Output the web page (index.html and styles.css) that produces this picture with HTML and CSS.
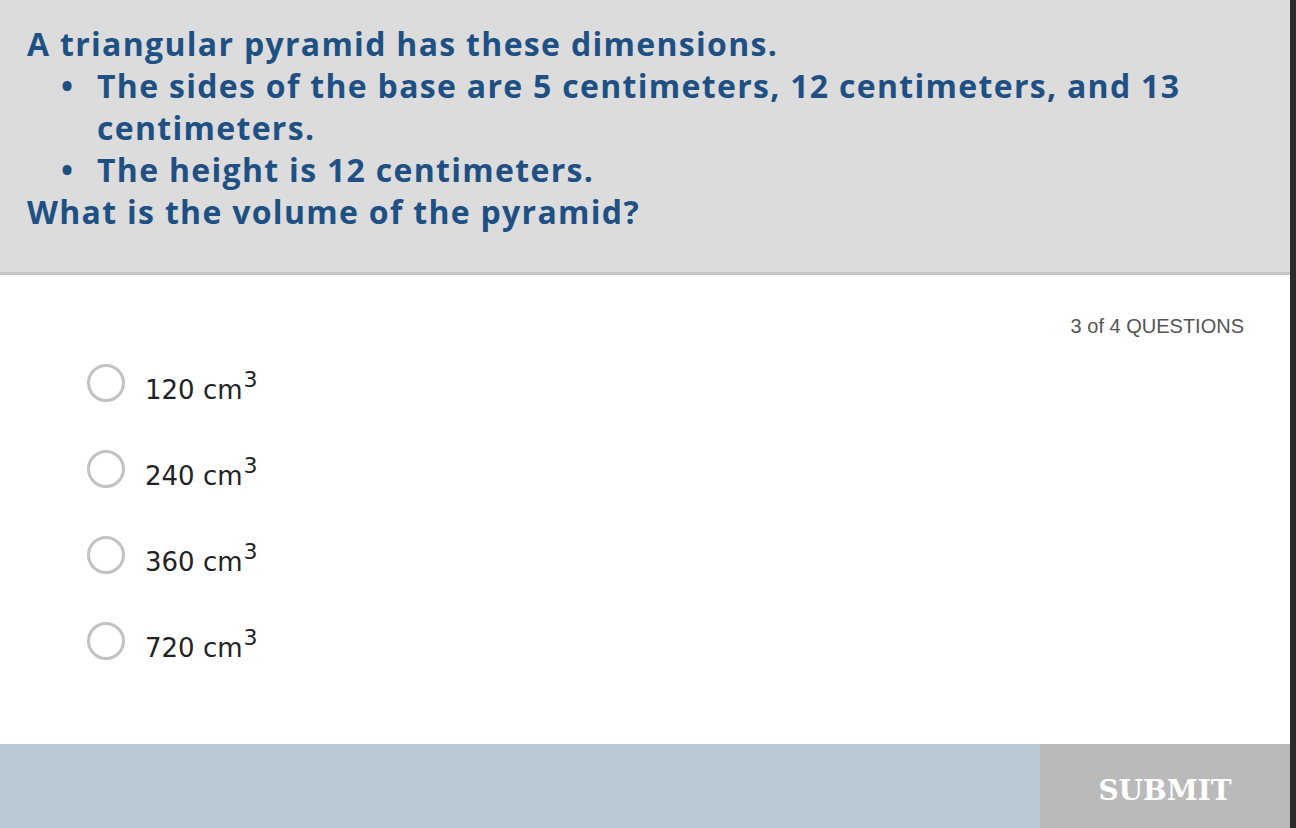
FILE: index.html
```html
<!DOCTYPE html>
<html lang="en">
<head>
  <meta charset="UTF-8" />
  <meta name="viewport" content="width=device-width, initial-scale=1.0" />
  <title>Quiz</title>
  <link rel="stylesheet" href="styles.css">
</head>
<body>
  <div id="quiz">
    <section class="question">
      <p>A triangular pyramid has these dimensions.</p>
      <ul>
        <li>The sides of the base are 5 centimeters, 12 centimeters, and 13 centimeters.</li>
        <li>The height is 12 centimeters.</li>
      </ul>
      <p>What is the volume of the pyramid?</p>
    </section>

    <section class="answers">
      <div class="progress">3 of 4 QUESTIONS</div>
      <label class="choice"><span class="radio"></span><span class="choice-text">120 cm<sup>3</sup></span></label>
      <label class="choice"><span class="radio"></span><span class="choice-text">240 cm<sup>3</sup></span></label>
      <label class="choice"><span class="radio"></span><span class="choice-text">360 cm<sup>3</sup></span></label>
      <label class="choice"><span class="radio"></span><span class="choice-text">720 cm<sup>3</sup></span></label>
    </section>

    <footer>
      <button class="submit">SUBMIT</button>
    </footer>
  </div>
</body>
</html>
```

FILE: styles.css
```css
/* ======================
   Base
   ====================== */
*, *::before, *::after {
  box-sizing: border-box;
  margin: 0;
  padding: 0;
}
html, body {
  height: 100%;
  background-color: #2b2b2b;
}

#quiz {
  width: 1290px;
  height: 828px;
  display: flex;
  flex-direction: column;
  background-color: #fff;
}

/* ======================
   Question
   ====================== */
.question {
  height: 275px;
  padding: 23px 60px 0 27px;
  background-color: #dcdcdc;
  border-bottom: 3px solid #c4c4c4;
  font-family: 'Open Sans', sans-serif;
  font-weight: 700;
  font-size: 32px;
  line-height: 42px;
  color: #1f5084;
  letter-spacing: 1.3px;
}
.question ul {
  list-style: none;
  padding-left: 70px;
}
.question li::before {
  content: '\2022';
  display: inline-block;
  width: 36px;
  margin-left: -36px;
}

/* ======================
   Answers
   ====================== */
.answers {
  flex: 1;
  padding: 40px 46px 0 87px;
  display: flex;
  flex-direction: column;
}
.progress {
  align-self: flex-end;
  font-family: 'Liberation Sans', Arial, sans-serif;
  font-size: 20px;
  color: #555;
  margin-bottom: 2px;
}
.choice {
  display: flex;
  align-items: center;
  gap: 20px;
  height: 86px;
  font-family: 'DejaVu Sans', sans-serif;
  font-size: 26px;
  color: #222;
  cursor: pointer;
}
.choice-text {
  padding-top: 14px;
}
.radio {
  width: 38px;
  height: 38px;
  border: 3px solid #c2c2c2;
  border-radius: 50%;
  flex-shrink: 0;
}
.choice sup {
  font-size: 22px;
  line-height: 0;
  margin-left: 1px;
  vertical-align: 12px;
}

/* ======================
   Footer
   ====================== */
footer {
  height: 84px;
  display: flex;
  justify-content: flex-end;
  background-color: #b9c8d2;
}
.submit {
  width: 250px;
  padding-top: 8px;
  border: none;
  background-color: #bababa;
  color: #fff;
  font-family: 'DejaVu Serif', serif;
  font-weight: 700;
  font-size: 28px;
  cursor: pointer;
}
```
